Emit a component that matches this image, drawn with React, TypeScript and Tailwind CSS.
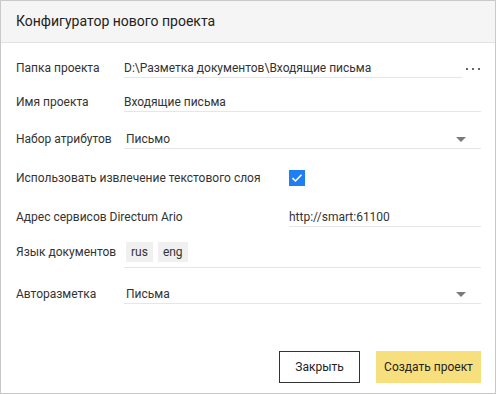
import React from "react";

const font = { fontFamily: "Roboto, 'Liberation Sans', sans-serif" };

function Arrow() {
  return (
    <svg width="10" height="5" viewBox="0 0 10 5" className="shrink-0">
      <path d="M0 0 H10 L5 5 Z" fill="#7a7a7a" />
    </svg>
  );
}

function Label({ children, w }: { children: React.ReactNode; w: string }) {
  return <div className={`${w} shrink-0 leading-4 text-[#333] whitespace-nowrap`}>{children}</div>;
}

export default function App() {
  return (
    <div
      style={font}
      className="w-[496px] h-[394px] bg-white border border-[#c9c9c9] flex flex-col text-[12px] text-[#333]"
    >
      {/* header */}
      <div className="h-[42px] shrink-0 bg-[#f5f5f5] border-b border-[#e2e2e2] pl-[15px] flex items-center text-[14px] text-[#222]">
        Конфигуратор нового проекта
      </div>

      <div className="flex flex-col pl-[15px] pr-[14px]">
        {/* folder */}
        <div className="flex items-start mt-[17px]">
          <Label w="w-[108px]">Папка проекта</Label>
          <div className="flex-1 border-b border-[#e6e6e6] leading-4 pb-px">
            D:\Разметка документов\Входящие письма
          </div>
          <div className="w-[19px] shrink-0 flex justify-end gap-[4px] pt-[8px] pr-[1px]">
            <span className="w-[2px] h-[2px] bg-[#666]" />
            <span className="w-[2px] h-[2px] bg-[#666]" />
            <span className="w-[2px] h-[2px] bg-[#666]" />
          </div>
        </div>

        {/* name */}
        <div className="flex items-start mt-[16px]">
          <Label w="w-[108px]">Имя проекта</Label>
          <div className="flex-1 border-b border-[#e6e6e6] leading-4 pb-px">Входящие письма</div>
        </div>

        {/* attributes */}
        <div className="flex items-start mt-[19px]">
          <Label w="w-[108px]">Набор атрибутов</Label>
          <div className="flex-1 border-b border-[#e6e6e6] leading-4 pb-px pl-[2px] pr-[15px] flex items-center justify-between">
            <span>Письмо</span>
            <Arrow />
          </div>
        </div>

        {/* text layer */}
        <div className="flex items-center mt-[21px] h-4">
          <Label w="w-[273px]">Использовать извлечение текстового слоя</Label>
          <div className="w-4 h-4 bg-[#1f7ef4] flex items-center justify-center">
            <svg width="12" height="10" viewBox="0 0 12 10">
              <path d="M1.5 5.2 L4.5 8 L10.5 1.8" stroke="white" strokeWidth="1.6" fill="none" />
            </svg>
          </div>
        </div>

        {/* services */}
        <div className="flex items-start mt-[23px]">
          <Label w="w-[273px]">Адрес сервисов Directum Ario</Label>
          <div className="flex-1 border-b border-[#e6e6e6] leading-4 pb-px">http://smart:61100</div>
        </div>

        {/* languages */}
        <div className="flex items-start mt-[15px]">
          <div className="w-[108px] shrink-0 leading-4 text-[#333] pt-[2px] whitespace-nowrap">Язык документов</div>
          <div className="flex-1 border-b border-[#e6e6e6] pb-[5px] pl-[2px] flex gap-[5px]">
            <span className="h-5 leading-5 px-[5px] bg-[#f0f0f0]">rus</span>
            <span className="h-5 leading-5 px-[5px] bg-[#f0f0f0]">eng</span>
          </div>
        </div>

        {/* auto markup */}
        <div className="flex items-start mt-[18px]">
          <Label w="w-[108px]">Авторазметка</Label>
          <div className="flex-1 border-b border-[#e6e6e6] leading-4 pb-px pl-[2px] pr-[15px] flex items-center justify-between">
            <span>Письма</span>
            <Arrow />
          </div>
        </div>
      </div>

      {/* footer */}
      <div className="mt-auto flex justify-end gap-4 pr-[14px] pb-[10px]">
        <button className="w-[81px] h-8 border border-[#333] bg-white text-[12px] text-[#222]">
          Закрыть
        </button>
        <button className="w-[105px] h-8 bg-[#f7df7e] text-[12px] text-[#222]">Создать проект</button>
      </div>
    </div>
  );
}
